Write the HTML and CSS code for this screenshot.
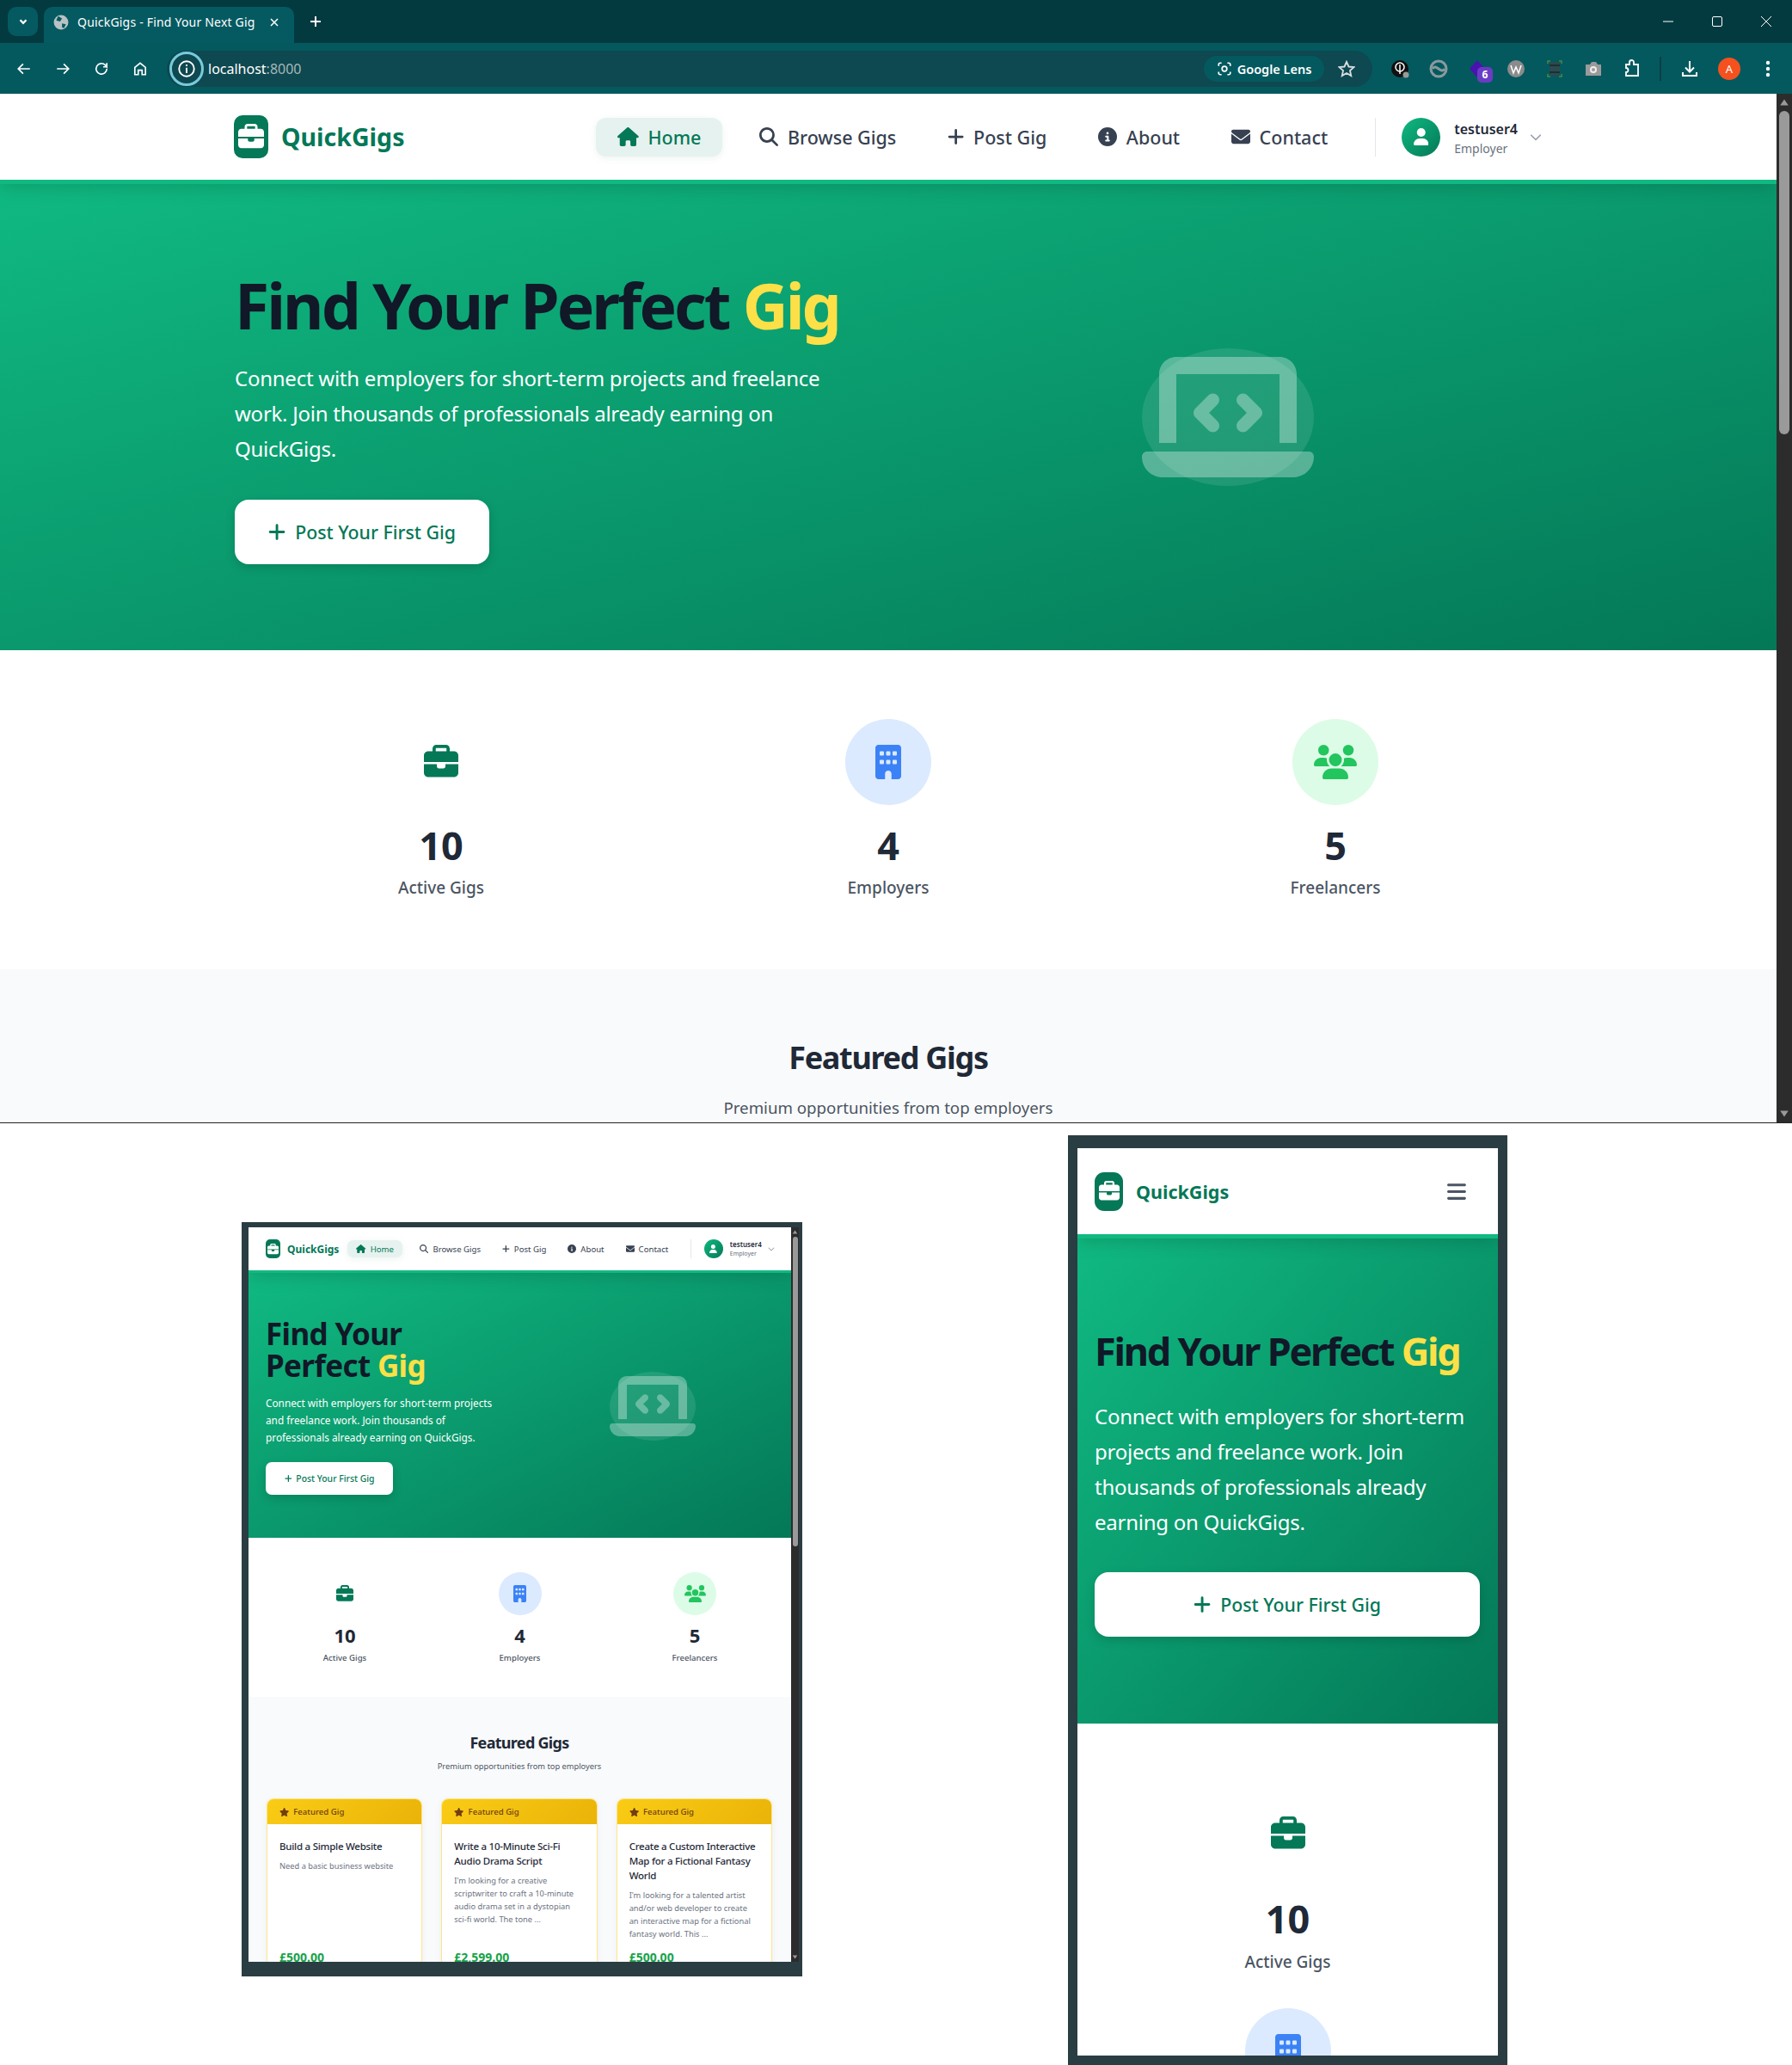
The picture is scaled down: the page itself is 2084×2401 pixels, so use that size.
FILE: index.html
```html
<!DOCTYPE html>
<html>
<head>
<meta charset="utf-8">
<title>QuickGigs - Find Your Next Gig</title>
<link rel="stylesheet" href="styles.css">
</head>
<body>

<svg class="sprite" xmlns="http://www.w3.org/2000/svg">
  <defs>
    <path id="i-house" d="M575.8 255.5c0 18-15 32.1-32 32.1h-32l.7 160.2c0 2.7-.2 5.4-.5 8.1V472c0 22.1-17.9 40-40 40H456c-1.1 0-2.2 0-3.3-.1c-1.4 .1-2.8 .1-4.2 .1H416 392c-22.1 0-40-17.9-40-40V448 384c0-17.7-14.3-32-32-32H256c-17.7 0-32 14.3-32 32v64 24c0 22.1-17.9 40-40 40H160 128.1c-1.5 0-3-.1-4.5-.2c-1.2 .1-2.4 .2-3.6 .2H104c-22.1 0-40-17.9-40-40V360c0-.9 0-1.9 .1-2.8V287.6H32c-18 0-32-14-32-32.1c0-9 3-17 10-24L266.4 8c7-7 15-8 22-8s15 2 21 7L564.8 231.5c8 7 12 15 11 24z"/>
    <path id="i-search" d="M416 208c0 45.9-14.9 88.3-40 122.7L502.6 457.4c12.5 12.5 12.5 32.8 0 45.3s-32.8 12.5-45.3 0L330.7 376c-34.4 25.2-76.8 40-122.7 40C93.1 416 0 322.9 0 208S93.1 0 208 0S416 93.1 416 208zM208 352a144 144 0 1 0 0-288 144 144 0 1 0 0 288z"/>
    <path id="i-plus" d="M256 80c0-17.7-14.3-32-32-32s-32 14.3-32 32V224H48c-17.7 0-32 14.3-32 32s14.3 32 32 32H192V432c0 17.7 14.3 32 32 32s32-14.3 32-32V288H400c17.7 0 32-14.3 32-32s-14.3-32-32-32H256V80z"/>
    <path id="i-info" d="M256 512A256 256 0 1 0 256 0a256 256 0 1 0 0 512zM216 336h24V272H216c-13.3 0-24-10.7-24-24s10.7-24 24-24h48c13.3 0 24 10.7 24 24v88h8c13.3 0 24 10.7 24 24s-10.7 24-24 24H216c-13.3 0-24-10.7-24-24s10.7-24 24-24zm40-208a32 32 0 1 1 0 64 32 32 0 1 1 0-64z"/>
    <path id="i-envelope" d="M48 64C21.5 64 0 85.5 0 112c0 15.1 7.1 29.3 19.2 38.4L236.8 313.6c11.4 8.5 27 8.5 38.4 0L492.8 150.4c12.1-9.1 19.2-23.3 19.2-38.4c0-26.5-21.5-48-48-48H48zM0 176V384c0 35.3 28.7 64 64 64H448c35.3 0 64-28.7 64-64V176L294.4 339.2c-22.8 17.1-54 17.1-76.8 0L0 176z"/>
    <path id="i-user" d="M224 256A128 128 0 1 0 224 0a128 128 0 1 0 0 256zm-45.7 48C79.8 304 0 383.8 0 482.3C0 498.7 13.3 512 29.7 512H418.3c16.4 0 29.7-13.3 29.7-29.7C448 383.8 368.2 304 269.7 304H178.3z"/>
    <path id="i-briefcase" d="M184 48H328c4.4 0 8 3.6 8 8V96H176V56c0-4.4 3.6-8 8-8zm-56 8V96H64C28.7 96 0 124.7 0 160v96H192 320 512V160c0-35.3-28.7-64-64-64H384V56c0-30.9-25.1-56-56-56H184c-30.9 0-56 25.1-56 56zM512 288H320v32c0 17.7-14.3 32-32 32H224c-17.7 0-32-14.3-32-32V288H0V416c0 35.3 28.7 64 64 64H448c35.3 0 64-28.7 64-64V288z"/>
    <path id="i-building" d="M48 0C21.5 0 0 21.5 0 48V464c0 26.5 21.5 48 48 48h96V432c0-26.5 21.5-48 48-48s48 21.5 48 48v80h96c26.5 0 48-21.5 48-48V48c0-26.5-21.5-48-48-48H48zM64 240c0-8.8 7.2-16 16-16h32c8.8 0 16 7.2 16 16v32c0 8.8-7.2 16-16 16H80c-8.8 0-16-7.2-16-16V240zm112-16h32c8.8 0 16 7.2 16 16v32c0 8.8-7.2 16-16 16H176c-8.8 0-16-7.2-16-16V240c0-8.8 7.2-16 16-16zm80 16c0-8.8 7.2-16 16-16h32c8.8 0 16 7.2 16 16v32c0 8.8-7.2 16-16 16H272c-8.8 0-16-7.2-16-16V240zM80 96h32c8.8 0 16 7.2 16 16v32c0 8.8-7.2 16-16 16H80c-8.8 0-16-7.2-16-16V112c0-8.8 7.2-16 16-16zm80 16c0-8.8 7.2-16 16-16h32c8.8 0 16 7.2 16 16v32c0 8.8-7.2 16-16 16H176c-8.8 0-16-7.2-16-16V112zM272 96h32c8.8 0 16 7.2 16 16v32c0 8.8-7.2 16-16 16H272c-8.8 0-16-7.2-16-16V112c0-8.8 7.2-16 16-16z"/>
    <path id="i-users" d="M144 0a80 80 0 1 1 0 160A80 80 0 1 1 144 0zM512 0a80 80 0 1 1 0 160A80 80 0 1 1 512 0zM0 298.7C0 239.8 47.8 192 106.7 192h42.7c15.9 0 31 3.5 44.6 9.7c-1.3 7.2-1.9 14.7-1.9 22.3c0 38.2 16.8 72.5 43.3 96c-.2 0-.4 0-.7 0H21.3C9.6 320 0 310.4 0 298.7zM405.3 320c-.2 0-.4 0-.7 0c26.6-23.5 43.3-57.8 43.3-96c0-7.6-.7-15-1.9-22.3c13.6-6.3 28.7-9.7 44.6-9.7h42.7C592.2 192 640 239.8 640 298.7c0 11.8-9.6 21.3-21.3 21.3H405.3zM224 224a96 96 0 1 1 192 0 96 96 0 1 1 -192 0zM128 485.3C128 411.7 187.7 352 261.3 352H378.7C452.3 352 512 411.7 512 485.3c0 14.7-11.9 26.7-26.7 26.7H154.7c-14.7 0-26.7-11.9-26.7-26.7z"/>
    <path id="i-star" d="M316.9 18C311.6 7 300.4 0 288.1 0s-23.4 7-28.8 18L195 150.3 51.4 171.5c-12 1.8-22 10.2-25.7 21.7s-.7 24.2 7.9 32.7L137.8 329 113.2 474.7c-2 12 3 24.2 12.9 31.3s23 8 33.8 2.3l128.3-68.5 128.3 68.5c10.8 5.7 23.9 4.9 33.8-2.3s14.9-19.3 12.9-31.3L438.5 329 542.7 225.9c8.6-8.5 11.6-21.2 7.9-32.7s-13.7-19.9-25.7-21.7L381.2 150.3 316.9 18z"/>
    <path id="i-bars" d="M0 96C0 78.3 14.3 64 32 64H416c17.7 0 32 14.3 32 32s-14.3 32-32 32H32C14.3 128 0 113.7 0 96zM0 256c0-17.7 14.3-32 32-32H416c17.7 0 32 14.3 32 32s-14.3 32-32 32H32c-17.7 0-32-14.3-32-32zM448 416c0 17.7-14.3 32-32 32H32c-17.7 0-32-14.3-32-32s14.3-32 32-32H416c17.7 0 32 14.3 32 32z"/>
    <path id="i-chevron" d="M233.4 406.6c12.5 12.5 32.8 12.5 45.3 0l192-192c12.5-12.5 12.5-32.8 0-45.3s-32.8-12.5-45.3 0L256 338.7 86.6 169.4c-12.5-12.5-32.8-12.5-45.3 0s-12.5 32.8 0 45.3l192 192z"/>
    <path id="i-laptop" d="M64 96c0-35.3 28.7-64 64-64H512c35.3 0 64 28.7 64 64V352H512V96H128V352H64V96zM0 403.2C0 392.6 8.6 384 19.2 384H620.8c10.6 0 19.2 8.6 19.2 19.2c0 42.4-34.4 76.8-76.8 76.8H76.8C34.4 480 0 445.6 0 403.2zM281 209l-31 31 31 31c9.4 9.4 9.4 24.6 0 33.9s-24.6 9.4-33.9 0l-48-48c-9.4-9.4-9.4-24.6 0-33.9l48-48c9.4-9.4 24.6-9.4 33.9 0s9.4 24.6 0 33.9zM393 175l48 48c9.4 9.4 9.4 24.6 0 33.9l-48 48c-9.4 9.4-24.6 9.4-33.9 0s-9.4-24.6 0-33.9l31-31-31-31c-9.4-9.4-9.4-24.6 0-33.9s24.6-9.4 33.9 0z"/>
  </defs>
</svg>

<div class="browser">
  <div class="tabstrip">
    <div class="tab-search"><svg viewBox="0 0 12 12"><path d="M3 4.5 6 7.5 9 4.5"/></svg></div>
    <div class="tab">
      <svg class="favicon" viewBox="0 0 16 16"><circle cx="8" cy="8" r="7.5" fill="#b8c2c4"/><path d="M5 1.5 9 4 7 7 3 6ZM9 9l4 1-2 4-2-1Z" fill="#055a61"/></svg>
      <span class="tab-title">QuickGigs - Find Your Next Gig</span>
      <svg class="tab-close" viewBox="0 0 12 12"><path d="M2 2 10 10M10 2 2 10"/></svg>
    </div>
    <svg class="tab-new" viewBox="0 0 14 14"><path d="M7 1V13M1 7H13"/></svg>
    <div class="window-controls">
      <svg viewBox="0 0 14 14"><path d="M1 7H13"/></svg>
      <svg viewBox="0 0 14 14"><rect x="1.5" y="1.5" width="11" height="11" rx="1.5"/></svg>
      <svg viewBox="0 0 14 14"><path d="M1 1 13 13M13 1 1 13"/></svg>
    </div>
  </div>
  <div class="toolbar">
    <div class="toolbar-nav">
      <svg viewBox="0 0 16 16"><path d="M14 8H2M7 3 2 8l5 5"/></svg>
      <svg viewBox="0 0 16 16"><path d="M2 8H14M9 3l5 5-5 5"/></svg>
      <svg viewBox="0 0 16 16"><path d="M13.5 8a5.5 5.5 0 1 1-1.6-3.9L13.5 6V2M13.5 6H9.8"/></svg>
      <svg viewBox="0 0 16 16"><path d="M2.5 14V6.5L8 2l5.5 4.500V14H10V9.500H6V14Z"/></svg>
    </div>
    <div class="omnibox">
      <div class="site-info"><svg viewBox="0 0 16 16"><circle cx="8" cy="8" r="7"/><path d="M8 7V12M8 4V5.500"/></svg></div>
      <span class="url">localhost<span class="url-port">:8000</span></span>
      <div class="lens">
        <svg viewBox="0 0 16 16"><path d="M2 5V3.500A1.500 1.500 0 0 1 3.500 2H5M11 2h1.500A1.500 1.500 0 0 1 14 3.500V5M14 11v1.500a1.500 1.500 0 0 1-1.500 1.500H11M5 14H3.500A1.500 1.500 0 0 1 2 12.500V11"/><circle cx="8" cy="8" r="2.500"/></svg>
        <span>Google Lens</span>
      </div>
      <svg class="bookmark" viewBox="0 0 16 16"><path d="M8 1.500 10 6l4.800.500-3.600 3.200 1 4.800L8 12l-4.200 2.500 1-4.800L1.200 6.500 6 6Z"/></svg>
    </div>
    <div class="extensions">
      <svg viewBox="0 0 22 22"><circle cx="11" cy="11" r="10" fill="#111"/><circle cx="11" cy="9" r="5" fill="none" stroke="#fff" stroke-width="1.500"/><path d="M11 6V17" stroke="#fff" stroke-width="1.500"/><circle cx="18" cy="18" r="3.500" fill="#999"/></svg>
      <svg viewBox="0 0 22 22"><circle cx="11" cy="11" r="9" fill="none" stroke="#8a9a9d" stroke-width="3"/><path d="M4 11C8 4 14 18 18 11" fill="none" stroke="#8a9a9d" stroke-width="3"/></svg>
      <span class="ext-badge-wrap">
        <svg viewBox="0 0 22 22"><path d="M11 1 20 11 11 21 2 11Z" fill="#4a12b0"/></svg>
        <span class="ext-badge">6</span>
      </span>
      <svg viewBox="0 0 22 22"><circle cx="11" cy="11" r="10" fill="#8b8b8b"/><path d="M5 7 8 16l3-7 3 7 3-9" fill="none" stroke="#fff" stroke-width="1.500"/></svg>
      <svg viewBox="0 0 22 22"><rect x="5" y="3" width="12" height="16" fill="#2c4a4f"/><path d="M3 5V2H6M16 2H19V5M19 17V20H16M6 20H3V17" fill="none" stroke="#3f8f3f" stroke-width="1.500"/><path d="M5 7H17M5 15H17" stroke="#16292c" stroke-width="1.500"/></svg>
      <svg viewBox="0 0 22 22"><path d="M2 6H7L9 3H14L16 6H20V19H2Z" fill="#9a9a9a"/><circle cx="11" cy="12" r="4" fill="#eee"/><circle cx="11" cy="12" r="2" fill="#9a9a9a"/></svg>
      <svg viewBox="0 0 22 22"><path d="M4 6H8V3.500a2.500 2.500 0 0 1 5 0V6H18V19H4V15a2.500 2.500 0 0 0 0-5Z" fill="none" stroke="#fff" stroke-width="1.800"/></svg>
      <span class="toolbar-divider"></span>
      <svg viewBox="0 0 22 22"><path d="M11 2V14M6 9.500 11 14.500 16 9.500M3 15V19H19V15" fill="none" stroke="#fff" stroke-width="2"/></svg>
      <span class="profile">A</span>
      <svg class="dots" viewBox="0 0 6 22"><circle cx="3" cy="4" r="2.200"/><circle cx="3" cy="11" r="2.200"/><circle cx="3" cy="18" r="2.200"/></svg>
    </div>
  </div>

  <div class="viewport">
    <div class="site site-full">
      <nav class="site-nav">
        <a class="logo"><span class="logo-mark"><svg class="ico" viewBox="0 0 512 512"><use href="#i-briefcase"/></svg></span><span class="logo-text">QuickGigs</span></a>
        <ul class="nav-links">
          <li class="nav-link active"><svg class="ico" viewBox="0 0 576 512"><use href="#i-house"/></svg>Home</li>
          <li class="nav-link"><svg class="ico" viewBox="0 0 512 512"><use href="#i-search"/></svg>Browse Gigs</li>
          <li class="nav-link"><svg class="ico" viewBox="0 0 448 512"><use href="#i-plus"/></svg>Post Gig</li>
          <li class="nav-link"><svg class="ico" viewBox="0 0 512 512"><use href="#i-info"/></svg>About</li>
          <li class="nav-link"><svg class="ico" viewBox="0 0 512 512"><use href="#i-envelope"/></svg>Contact</li>
        </ul>
        <div class="nav-user">
          <span class="avatar"><svg class="ico" viewBox="0 0 448 512"><use href="#i-user"/></svg></span>
          <span class="user-meta"><span class="user-name">testuser4</span><span class="user-role">Employer</span></span>
          <svg class="ico user-caret" viewBox="0 0 512 512"><use href="#i-chevron"/></svg>
        </div>
      </nav>
      <section class="hero">
        <div class="hero-copy">
          <h1>Find Your Perfect <span class="accent">Gig</span></h1>
          <p>Connect with employers for short-term projects and freelance<br>work. Join thousands of professionals already earning on<br>QuickGigs.</p>
          <a class="hero-btn"><svg class="ico" viewBox="0 0 448 512"><use href="#i-plus"/></svg>Post Your First Gig</a>
        </div>
        <div class="hero-art"><span class="hero-blob"><svg class="ico" viewBox="0 0 640 512"><use href="#i-laptop"/></svg></span></div>
      </section>
      <section class="stats">
        <div class="stat"><span class="stat-icon tone-gigs"><svg class="ico" viewBox="0 0 512 512"><use href="#i-briefcase"/></svg></span><div class="stat-num">10</div><div class="stat-label">Active Gigs</div></div>
        <div class="stat"><span class="stat-icon tone-employers"><svg class="ico" viewBox="0 0 384 512"><use href="#i-building"/></svg></span><div class="stat-num">4</div><div class="stat-label">Employers</div></div>
        <div class="stat"><span class="stat-icon tone-freelancers"><svg class="ico" viewBox="0 0 640 512"><use href="#i-users"/></svg></span><div class="stat-num">5</div><div class="stat-label">Freelancers</div></div>
      </section>
      <section class="featured">
        <h2>Featured Gigs</h2>
        <p class="featured-sub">Premium opportunities from top employers</p>
      </section>
    </div>
    <div class="scrollbar">
      <svg viewBox="0 0 10 10"><path d="M5 2 9 8H1Z"/></svg>
      <span class="scroll-track"><span class="scroll-thumb"></span></span>
      <svg viewBox="0 0 10 10"><path d="M5 8 1 2H9Z"/></svg>
    </div>
  </div>
</div>

<div class="previews">
  <div class="device device-tablet">
    <div class="site site-mini">
      <nav class="site-nav">
        <a class="logo"><span class="logo-mark"><svg class="ico" viewBox="0 0 512 512"><use href="#i-briefcase"/></svg></span><span class="logo-text">QuickGigs</span></a>
        <ul class="nav-links">
          <li class="nav-link active"><svg class="ico" viewBox="0 0 576 512"><use href="#i-house"/></svg>Home</li>
          <li class="nav-link"><svg class="ico" viewBox="0 0 512 512"><use href="#i-search"/></svg>Browse Gigs</li>
          <li class="nav-link"><svg class="ico" viewBox="0 0 448 512"><use href="#i-plus"/></svg>Post Gig</li>
          <li class="nav-link"><svg class="ico" viewBox="0 0 512 512"><use href="#i-info"/></svg>About</li>
          <li class="nav-link"><svg class="ico" viewBox="0 0 512 512"><use href="#i-envelope"/></svg>Contact</li>
        </ul>
        <div class="nav-user">
          <span class="avatar"><svg class="ico" viewBox="0 0 448 512"><use href="#i-user"/></svg></span>
          <span class="user-meta"><span class="user-name">testuser4</span><span class="user-role">Employer</span></span>
          <svg class="ico user-caret" viewBox="0 0 512 512"><use href="#i-chevron"/></svg>
        </div>
      </nav>
      <section class="hero">
        <div class="hero-copy">
          <h1>Find Your<br>Perfect <span class="accent">Gig</span></h1>
          <p>Connect with employers for short-term projects<br>and freelance work. Join thousands of<br>professionals already earning on QuickGigs.</p>
          <a class="hero-btn"><svg class="ico" viewBox="0 0 448 512"><use href="#i-plus"/></svg>Post Your First Gig</a>
        </div>
        <div class="hero-art"><span class="hero-blob"><svg class="ico" viewBox="0 0 640 512"><use href="#i-laptop"/></svg></span></div>
      </section>
      <section class="stats">
        <div class="stat"><span class="stat-icon tone-gigs"><svg class="ico" viewBox="0 0 512 512"><use href="#i-briefcase"/></svg></span><div class="stat-num">10</div><div class="stat-label">Active Gigs</div></div>
        <div class="stat"><span class="stat-icon tone-employers"><svg class="ico" viewBox="0 0 384 512"><use href="#i-building"/></svg></span><div class="stat-num">4</div><div class="stat-label">Employers</div></div>
        <div class="stat"><span class="stat-icon tone-freelancers"><svg class="ico" viewBox="0 0 640 512"><use href="#i-users"/></svg></span><div class="stat-num">5</div><div class="stat-label">Freelancers</div></div>
      </section>
      <section class="featured">
        <h2>Featured Gigs</h2>
        <p class="featured-sub">Premium opportunities from top employers</p>
        <div class="gig-grid">
          <article class="gig-card">
            <div class="gig-head"><svg class="ico" viewBox="0 0 576 512"><use href="#i-star"/></svg>Featured Gig</div>
            <div class="gig-body">
              <h3>Build a Simple Website</h3>
              <p>Need a basic business website</p>
              <div class="gig-price">£500.00</div>
            </div>
          </article>
          <article class="gig-card">
            <div class="gig-head"><svg class="ico" viewBox="0 0 576 512"><use href="#i-star"/></svg>Featured Gig</div>
            <div class="gig-body">
              <h3>Write a 10-Minute Sci-Fi<br>Audio Drama Script</h3>
              <p>I'm looking for a creative<br>scriptwriter to craft a 10-minute<br>audio drama set in a dystopian<br>sci-fi world. The tone ...</p>
              <div class="gig-price">£2,599.00</div>
            </div>
          </article>
          <article class="gig-card">
            <div class="gig-head"><svg class="ico" viewBox="0 0 576 512"><use href="#i-star"/></svg>Featured Gig</div>
            <div class="gig-body">
              <h3>Create a Custom Interactive<br>Map for a Fictional Fantasy<br>World</h3>
              <p>I'm looking for a talented artist<br>and/or web developer to create<br>an interactive map for a fictional<br>fantasy world. This ...</p>
              <div class="gig-price">£500.00</div>
            </div>
          </article>
        </div>
      </section>
    </div>
    <div class="scrollbar">
      <svg viewBox="0 0 10 10"><path d="M5 2 9 8H1Z"/></svg>
      <span class="scroll-track"><span class="scroll-thumb"></span></span>
      <svg viewBox="0 0 10 10"><path d="M5 8 1 2H9Z"/></svg>
    </div>
  </div>

  <div class="device device-phone">
    <div class="site site-phone">
      <nav class="site-nav">
        <a class="logo"><span class="logo-mark"><svg class="ico" viewBox="0 0 512 512"><use href="#i-briefcase"/></svg></span><span class="logo-text">QuickGigs</span></a>
        <svg class="ico nav-toggle" viewBox="0 0 448 512"><use href="#i-bars"/></svg>
      </nav>
      <section class="hero">
        <div class="hero-copy">
          <h1>Find Your Perfect <span class="accent">Gig</span></h1>
          <p>Connect with employers for short-term<br>projects and freelance work. Join<br>thousands of professionals already<br>earning on QuickGigs.</p>
          <a class="hero-btn"><svg class="ico" viewBox="0 0 448 512"><use href="#i-plus"/></svg>Post Your First Gig</a>
        </div>
      </section>
      <section class="stats">
        <div class="stat"><span class="stat-icon tone-gigs"><svg class="ico" viewBox="0 0 512 512"><use href="#i-briefcase"/></svg></span><div class="stat-num">10</div><div class="stat-label">Active Gigs</div></div>
        <div class="stat"><span class="stat-icon tone-employers"><svg class="ico" viewBox="0 0 384 512"><use href="#i-building"/></svg></span><div class="stat-num">4</div><div class="stat-label">Employers</div></div>
      </section>
    </div>
  </div>
</div>

</body>
</html>
```

FILE: styles.css
```css
html, body {
  margin: 0;
  height: 2401px;
  overflow: hidden;
  background: #fff;
  font-family: "Noto Sans", "Open Sans", sans-serif;
}

ul, h1, h2, h3, p {
  margin: 0;
  padding: 0;
}

.sprite {
  display: none;
}

.ico {
  display: block;
  height: 1em;
  width: auto;
  fill: currentColor;
  flex: none;
}

/* browser chrome */
.browser {
  height: 1305px;
  display: flex;
  flex-direction: column;
  border-bottom: 1px solid #222;
}

.tabstrip {
  height: 50px;
  background: #033a40;
  display: flex;
  align-items: flex-end;
  color: #fff;
  box-sizing: border-box;
  padding-left: 9px;
}

.tabstrip svg,
.toolbar-nav svg,
.site-info svg,
.lens svg,
.bookmark {
  fill: none;
  stroke: currentColor;
  stroke-width: 1.5;
}

.tab-search {
  width: 35px;
  height: 34px;
  margin-bottom: 8px;
  border-radius: 10px;
  background: #055a61;
  display: flex;
  align-items: center;
  justify-content: center;
}

.tab-search svg {
  width: 14px;
  height: 14px;
  stroke-width: 2;
}

.tab {
  width: 291px;
  height: 42px;
  margin-left: 7px;
  background: #055a61;
  border-radius: 10px 10px 0 0;
  display: flex;
  align-items: center;
  box-sizing: border-box;
  padding: 0 0 7px 11px;
  font-size: 14px;
}

.tabstrip .favicon {
  width: 18px;
  height: 18px;
  stroke: none;
}

.tab-title {
  margin-left: 10px;
  width: 219px;
  white-space: nowrap;
  letter-spacing: .2px;
}

.tab-close {
  width: 12px;
  height: 12px;
  margin-left: 4px;
}

.tab-new {
  width: 14px;
  height: 14px;
  margin: 0 0 18px 18px;
  stroke-width: 2 !important;
}

.window-controls {
  margin-left: auto;
  display: flex;
  gap: 43px;
  padding: 0 23px 18px 0;
}

.window-controls svg {
  width: 14px;
  height: 14px;
  stroke-width: 1;
}

.toolbar {
  height: 59px;
  background: #04595f;
  display: flex;
  align-items: center;
  color: #fff;
}

.toolbar-nav {
  display: flex;
  gap: 27px;
  padding-left: 19px;
  width: 176px;
  box-sizing: border-box;
}

.toolbar-nav svg {
  width: 18px;
  height: 18px;
}

.omnibox {
  width: 1402px;
  height: 42px;
  background: #0e4850;
  border-radius: 21px;
  display: flex;
  align-items: center;
  box-sizing: border-box;
  padding-left: 3px;
  margin-left: 18px;
  font-size: 16px;
}

.site-info {
  width: 40px;
  height: 40px;
  box-sizing: border-box;
  border: 3px solid #76cbdc;
  border-radius: 50%;
  display: flex;
  align-items: center;
  justify-content: center;
}

.site-info svg {
  width: 20px;
  height: 20px;
}

.url {
  margin-left: 5px;
}

.url-port {
  color: #a3b8bb;
}

.lens {
  margin-left: auto;
  height: 30px;
  width: 140px;
  background: #04595f;
  border-radius: 15px;
  display: flex;
  align-items: center;
  justify-content: center;
  gap: 6px;
  font-size: 14.5px;
  font-weight: 600;
}

.lens svg {
  width: 18px;
  height: 18px;
}

.bookmark {
  width: 20px;
  height: 20px;
  margin: 0 20px 0 16px;
  color: #d5dddf;
}

.extensions {
  display: flex;
  align-items: center;
  gap: 23px;
  padding-left: 21px;
}

.extensions svg {
  width: 22px;
  height: 22px;
  flex: none;
}

.ext-badge-wrap {
  position: relative;
  display: block;
  height: 22px;
}

.ext-badge {
  position: absolute;
  left: 11px;
  top: 9px;
  width: 18px;
  height: 18px;
  background: #6a3cc4;
  border-radius: 5px;
  font-size: 12px;
  font-weight: 700;
  text-align: center;
  line-height: 18px;
}

.toolbar-divider {
  width: 2px;
  height: 28px;
  background: #0b3f44;
  margin: 0 -1px 0 -2px;
}

.profile {
  width: 26px;
  height: 26px;
  border-radius: 50%;
  background: #f4511e;
  font-size: 13px;
  text-align: center;
  line-height: 26px;
  margin-left: -1px;
}

.extensions .dots {
  width: 6px;
  fill: #fff;
  margin-left: 6px;
}

.viewport {
  flex: 1;
  display: flex;
  min-height: 0;
}

.scrollbar {
  width: 18px;
  flex: none;
  background: #2c2c2c;
  display: flex;
  flex-direction: column;
  align-items: center;
  fill: #9a9a9a;
}

.scrollbar svg {
  width: 12px;
  height: 12px;
  margin: 4px 0;
  flex: none;
}

.scroll-track {
  flex: 1;
  width: 100%;
  display: flex;
  justify-content: center;
}

.scroll-thumb {
  width: 12px;
  height: 376px;
  border-radius: 6px;
  background: #9a9a9a;
}

/* the site */
.site {
  flex: 1;
  min-width: 0;
  overflow: hidden;
  color: #1f2937;
  background: #fff;
}

.site-nav {
  display: flex;
  align-items: center;
  background: #fff;
  border-bottom: 5px solid #10b981;
  box-shadow: 0 4px 20px rgba(0, 0, 0, .16);
  position: relative;
}

.logo {
  display: flex;
  align-items: center;
}

.logo-mark {
  background: #047857;
  color: #fff;
  display: flex;
  align-items: center;
  justify-content: center;
}

.logo-text {
  color: #047857;
  font-weight: 700;
}

.nav-links {
  list-style: none;
  display: flex;
  align-items: center;
}

.nav-link {
  display: flex;
  align-items: center;
  color: #374151;
  font-weight: 500;
  white-space: nowrap;
}

.nav-link.active {
  background: #e6f2ef;
  color: #047857;
  box-shadow: 0 2px 8px rgba(4, 120, 87, .08);
}

.nav-user {
  display: flex;
  align-items: center;
  border-left: 1px solid #e5e7eb;
}

.avatar {
  background: linear-gradient(135deg, #10b981, #047857);
  color: #fff;
  border-radius: 50%;
  display: flex;
  align-items: center;
  justify-content: center;
  flex: none;
}

.user-meta {
  display: flex;
  flex-direction: column;
}

.user-name {
  color: #1f2937;
  font-weight: 600;
}

.user-role {
  color: #6b7280;
}

.user-caret {
  color: #9ca3af;
}

.hero {
  background: linear-gradient(to bottom right, #10b981 0%, #047857 100%);
  display: grid;
  grid-template-columns: 1fr 1fr;
  align-items: center;
}

.hero h1 {
  color: #111827;
  font-weight: 700;
  white-space: nowrap;
}

.accent {
  color: #fde047;
}

.hero p {
  color: #fff;
  white-space: nowrap;
}

.hero-btn {
  display: inline-flex;
  align-items: center;
  justify-content: center;
  background: #fff;
  color: #047857;
  font-weight: 500;
  box-sizing: border-box;
  box-shadow: 0 4px 12px rgba(0, 0, 0, .15);
}

.hero-art {
  display: flex;
  justify-content: center;
}

.hero-blob {
  display: block;
  background: rgba(255, 255, 255, .1);
  border-radius: 50%;
  color: rgba(255, 255, 255, .32);
}

.stats {
  display: grid;
  text-align: center;
}

.stat-icon {
  display: flex;
  align-items: center;
  justify-content: center;
  border-radius: 50%;
  margin: 0 auto;
}

.tone-gigs {
  color: #047857;
}

.tone-employers {
  background: #dbeafe;
  color: #3b82f6;
}

.tone-freelancers {
  background: #dcfce7;
  color: #22c55e;
}

.stat-num {
  font-weight: 700;
  color: #1f2937;
}

.stat-label {
  color: #4b5563;
  font-weight: 500;
}

.featured {
  background: #f9fafb;
  text-align: center;
}

.featured h2 {
  font-weight: 700;
  color: #1f2937;
}

.featured-sub {
  color: #4b5563;
}

/* full width view */
.site-full .site-nav {
  height: 100px;
  padding: 0 273px 0 272px;
}

.site-full .logo-mark {
  width: 40px;
  height: 50px;
  border-radius: 10px;
  font-size: 30px;
}

.site-full .logo-text {
  font-size: 28.5px;
  margin-left: 15px;
}

.site-full .nav-links {
  margin-left: auto;
  gap: 10px;
}

.site-full .nav-link {
  font-size: 21.5px;
  padding: 0 25px;
  height: 45px;
  gap: 10.5px;
  border-radius: 12px;
}

.site-full .nav-link .ico {
  font-size: 22px;
}

.site-full .nav-link.active {
  margin-right: 8px;
}

.site-full .nav-user {
  height: 45px;
  margin-left: 30px;
  padding-left: 30px;
}

.site-full .avatar {
  width: 45px;
  height: 45px;
  font-size: 20px;
}

.site-full .user-meta {
  margin-left: 16px;
  padding-top: 2px;
}

.site-full .user-name {
  font-size: 16px;
  line-height: 24px;
}

.site-full .user-role {
  font-size: 14px;
  line-height: 21px;
}

.site-full .user-caret {
  font-size: 14px;
  margin-left: 14px;
}

.site-full .hero {
  padding: 100px 273px;
  column-gap: 58px;
}

.site-full h1 {
  font-size: 73px;
  line-height: 81px;
  letter-spacing: -2.9px;
  margin-bottom: 24px;
}

.site-full .hero p {
  font-size: 24px;
  line-height: 41px;
  letter-spacing: -.25px;
  margin-bottom: 39px;
}

.site-full .hero-btn {
  width: 296px;
  height: 75px;
  border-radius: 16px;
  font-size: 21.3px;
  gap: 11px;
}

.site-full .hero-btn .ico {
  font-size: 23px;
}

.site-full .hero-blob {
  font-size: 160px;
}

.site-full .stats {
  grid-template-columns: repeat(3, 520px);
  justify-content: center;
  padding: 80px 0;
}

.stat-icon {
  width: 100px;
  height: 100px;
  font-size: 40px;
}

.stat-num {
  font-size: 45px;
  line-height: 54px;
  margin-top: 20px;
}

.stat-label {
  font-size: 19px;
  line-height: 30px;
  margin-top: 7px;
}

.site-full .featured {
  padding-top: 76px;
}

.site-full h2 {
  font-size: 36px;
  line-height: 54px;
  letter-spacing: -1.3px;
}

.site-full .featured-sub {
  font-size: 18.7px;
  line-height: 30px;
  margin-top: 15.5px;
}

/* the two device frames */
.previews {
  display: flex;
  align-items: flex-start;
  padding-left: 281px;
  gap: 309px;
}

.device {
  display: flex;
  box-sizing: border-box;
  border-style: solid;
  border-color: #2a3d42;
}

.device-tablet {
  width: 652px;
  height: 877px;
  margin-top: 115px;
  border-width: 6px 4px 17px 8px;
}

.device-tablet .scrollbar {
  width: 9px;
}

.device-tablet .scrollbar svg {
  width: 7px;
  height: 7px;
  margin: 2px 0;
}

.device-tablet .scroll-thumb {
  width: 6px;
  height: 360px;
  border-radius: 3px;
}

.site-mini .site-nav {
  height: 50px;
  padding: 0 20px;
  border-bottom-width: 3px;
}

.site-mini .logo-mark {
  width: 17px;
  height: 22px;
  border-radius: 5px;
  font-size: 13px;
}

.site-mini .logo-text {
  font-size: 12px;
  margin-left: 8px;
}

.site-mini .nav-links {
  margin-left: 10px;
  gap: 0;
}

.site-mini .nav-link {
  font-size: 9.6px;
  font-weight: 400;
  height: 20px;
  gap: 5px;
  padding: 0 10px;
  border-radius: 7px;
  margin-right: 5px;
}

.site-mini .nav-link.active {
  margin-right: 10.5px;
}

.site-mini .nav-link .ico {
  font-size: 10px;
}

.site-mini .nav-user {
  height: 22px;
  margin-left: 10.5px;
  padding-left: 15px;
}

.site-mini .avatar {
  width: 22px;
  height: 22px;
  font-size: 10px;
}

.site-mini .user-meta {
  margin-left: 8px;
}

.site-mini .user-name {
  font-size: 8px;
  line-height: 11px;
}

.site-mini .user-role {
  font-size: 7px;
  line-height: 11px;
}

.site-mini .user-caret {
  font-size: 8px;
  margin-left: 7px;
}

.site-mini .hero {
  padding: 52px 20px 50px;
  column-gap: 28px;
}

.site-mini h1 {
  font-size: 35px;
  line-height: 37px;
  letter-spacing: -.65px;
  margin-bottom: 15px;
}

.site-mini .hero p {
  font-size: 11.8px;
  line-height: 20px;
  margin-bottom: 19px;
}

.site-mini .hero-btn {
  width: 148px;
  height: 38px;
  border-radius: 7px;
  font-size: 10.4px;
  gap: 5px;
}

.site-mini .hero-btn .ico {
  font-size: 10px;
}

.site-mini .hero-blob {
  font-size: 80px;
}

.site-mini .stats {
  grid-template-columns: repeat(3, 203.500px);
  justify-content: center;
  padding: 40px 0 38px;
}

.site-mini .stat-icon {
  width: 50px;
  height: 50px;
  font-size: 20px;
}

.site-mini .stat-num {
  font-size: 22px;
  line-height: 26px;
  margin-top: 10px;
}

.site-mini .stat-label {
  font-size: 9.6px;
  line-height: 15px;
  margin-top: 6px;
}

.site-mini .featured {
  padding: 40px 22px 0 21px;
}

.site-mini h2 {
  font-size: 18px;
  line-height: 26px;
  letter-spacing: -.7px;
}

.site-mini .featured-sub {
  font-size: 9.3px;
  line-height: 14px;
  margin-top: 8px;
}

.gig-grid {
  display: grid;
  grid-template-columns: repeat(3, 1fr);
  gap: 22px;
  margin-top: 30px;
  text-align: left;
}

.gig-card {
  display: flex;
  flex-direction: column;
  background: #fff;
  border: 1px solid #fde68a;
  border-radius: 8px;
  overflow: hidden;
  box-shadow: 0 2px 8px rgba(0, 0, 0, .05);
}

.gig-head {
  height: 29px;
  box-sizing: border-box;
  display: flex;
  align-items: center;
  gap: 5px;
  padding-left: 14px;
  background: linear-gradient(135deg, #facc15, #eab308);
  color: #713f12;
  font-size: 9.6px;
  font-weight: 500;
}

.gig-head .ico {
  font-size: 10px;
}

.gig-body {
  flex: 1;
  display: flex;
  flex-direction: column;
  padding: 17px 14px 0;
}

.gig-body h3 {
  font-size: 11.5px;
  line-height: 17px;
  font-weight: 500;
  letter-spacing: -.25px;
  color: #1f2937;
  white-space: nowrap;
}

.gig-body p {
  font-size: 9.3px;
  line-height: 15px;
  color: #6b7280;
  margin-top: 7px;
  white-space: nowrap;
}

.gig-price {
  margin-top: auto;
  padding-top: 10px;
  font-size: 14px;
  line-height: 20px;
  font-weight: 700;
  color: #16a34a;
}

/* phone */
.device-phone {
  width: 511px;
  height: 1081px;
  margin-top: 14px;
  border-width: 15px 11px 11px 11px;
}

.site-phone .site-nav {
  height: 100px;
  padding: 0 37px 0 20px;
}

.site-phone .logo-mark {
  width: 33px;
  height: 45px;
  border-radius: 11px;
  font-size: 24px;
}

.site-phone .logo-text {
  font-size: 21.5px;
  margin-left: 15px;
}

.nav-toggle {
  margin-left: auto;
  font-size: 25px;
  color: #4b5563;
}

.site-phone .hero {
  display: block;
  padding: 106px 21px 101px 20px;
}

.site-phone h1 {
  font-size: 45px;
  line-height: 50px;
  letter-spacing: -2.2px;
  margin-bottom: 30px;
}

.site-phone .hero p {
  font-size: 24px;
  line-height: 41px;
  letter-spacing: -.25px;
  margin-bottom: 38px;
}

.site-phone .hero-btn {
  display: flex;
  height: 75px;
  border-radius: 16px;
  font-size: 21.3px;
  gap: 11px;
}

.site-phone .hero-btn .ico {
  font-size: 23px;
}

.site-phone .stats {
  padding-top: 78px;
  row-gap: 39px;
}

.site-phone .stat-num {
  margin-top: 21.5px;
}

.site-phone .stat-label {
  margin-top: 8px;
}
```
